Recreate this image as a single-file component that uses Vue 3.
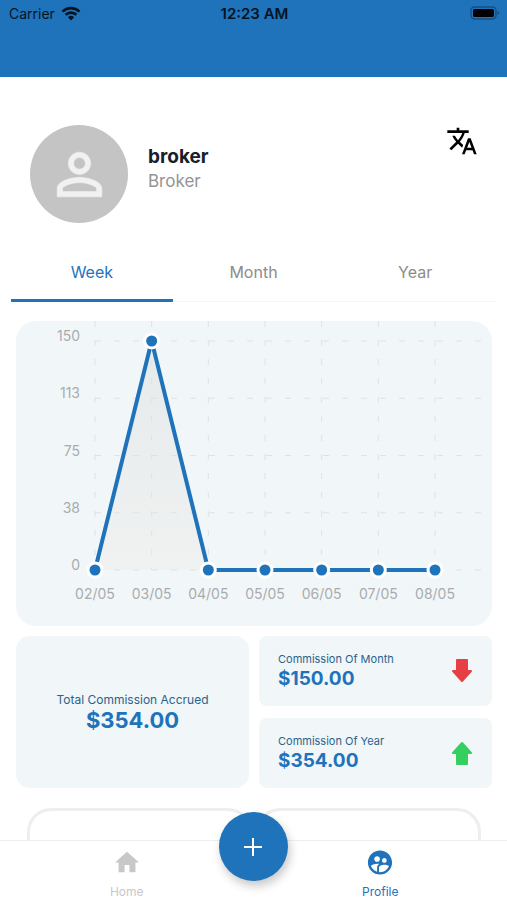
<template>
  <div class="app">
    <header class="topBar">
      <div class="carrier">
        <span>Carrier</span>
        <svg class="wifi" viewBox="0 0 20 15" aria-hidden="true">
          <path d="M1.5 5.6a12.2 12.2 0 0 1 17 0" />
          <path d="M4.6 8.8a7.8 7.8 0 0 1 10.8 0" />
          <path class="wifiDot" d="M10 14.4 6.9 11.2a4.5 4.5 0 0 1 6.2 0z" />
        </svg>
      </div>
      <span class="time">12:23 AM</span>
      <svg class="battery" viewBox="0 0 30 14" aria-hidden="true">
        <rect class="batteryCase" x="1" y="1" width="25" height="12" rx="3.5" />
        <rect x="3" y="3" width="21" height="8" rx="1.5" />
        <path class="batteryTip" d="M27.5 5v4q1.8-.8 1.8-2t-1.8-2z" />
      </svg>
    </header>

    <main class="content">
      <section class="profile">
        <div class="avatar">
          <svg viewBox="0 0 24 24" aria-hidden="true">
            <path
              d="M12 5.9c1.16 0 2.1.94 2.1 2.1s-.94 2.1-2.1 2.1S9.9 9.16 9.9 8s.94-2.1 2.1-2.1m0 9c2.97 0 6.1 1.46 6.1 2.1v1.1H5.9V17c0-.64 3.13-2.1 6.1-2.1M12 4C9.79 4 8 5.79 8 8s1.79 4 4 4 4-1.79 4-4-1.79-4-4-4zm0 9c-2.67 0-8 1.34-8 4v3h16v-3c0-2.66-5.33-4-8-4z"
            />
          </svg>
        </div>
        <div class="who">
          <h1>broker</h1>
          <p>Broker</p>
        </div>
        <button class="langBtn" type="button" aria-label="Language">
          <svg viewBox="0 0 24 24" aria-hidden="true">
            <path
              d="M12.87 15.07l-2.54-2.51.03-.03c1.74-1.94 2.98-4.17 3.71-6.53H17V4h-7V2H8v2H1v1.99h11.17C11.5 7.92 10.44 9.75 9 11.35 8.07 10.32 7.3 9.19 6.69 8h-2c.73 1.63 1.73 3.17 2.98 4.56l-5.09 5.02L4 19l5-5 3.11 3.11.76-2.04zM18.5 10h-2L12 22h2l1.12-3h4.75L21 22h2l-4.5-12zm-2.62 7l1.62-4.33L19.12 17h-3.24z"
            />
          </svg>
        </button>
      </section>

      <div class="tabs" role="tablist">
        <button
          v-for="tab in tabs"
          :key="tab"
          type="button"
          role="tab"
          class="tab"
          :class="{ active: tab === activeTab }"
          :aria-selected="tab === activeTab"
          @click="activeTab = tab"
        >
          {{ tab }}
        </button>
      </div>

      <section class="stats">
        <svg class="chart" viewBox="0 0 476 305">
          <defs>
            <linearGradient id="areaFill" x1="0" y1="0" x2="0" y2="1">
              <stop offset="0" stop-color="#e6eaea" />
              <stop offset="1" stop-color="#f0f2f2" />
            </linearGradient>
          </defs>
          <polygon :points="areaPoints" fill="url(#areaFill)" />
          <g class="grid">
            <line
              v-for="row in rows"
              :key="row.label"
              :x1="chart.left"
              :y1="row.y"
              x2="474"
              :y2="row.y"
            />
            <line
              v-for="p in points"
              :key="p.date"
              :x1="p.x"
              y1="0"
              :x2="p.x"
              :y2="chart.bottom"
            />
          </g>
          <polyline class="line" :points="linePoints" />
          <circle
            v-for="p in points"
            :key="p.date"
            class="dot"
            :cx="p.x"
            :cy="p.y"
            r="7"
          />
          <text
            v-for="row in rows"
            :key="row.label"
            class="axis end"
            x="64"
            :y="row.y"
          >
            {{ row.label }}
          </text>
          <text
            v-for="p in points"
            :key="p.date"
            class="axis middle"
            :x="p.x"
            y="278"
          >
            {{ p.date }}
          </text>
        </svg>

        <div class="cards">
          <div class="card total">
            <span class="label">Total Commission Accrued</span>
            <strong class="amount">$354.00</strong>
          </div>
          <div class="side">
            <div v-for="item in commissions" :key="item.label" class="card small">
              <div class="cardText">
                <span class="label">{{ item.label }}</span>
                <strong class="amount">{{ item.amount }}</strong>
              </div>
              <svg
                class="arrow"
                :class="item.trend"
                viewBox="0 0 22 26"
                aria-hidden="true"
              >
                <path
                  v-if="item.trend === 'down'"
                  d="M6 2h10v11h4l-9 10-9-10h4z"
                />
                <path v-else d="M6 24h10V13h4L11 3 2 13h4z" />
              </svg>
            </div>
          </div>
        </div>
      </section>

      <section class="boxes">
        <div class="box"></div>
        <div class="box"></div>
      </section>
    </main>

    <nav class="bottomNav">
      <a href="#home" class="navItem">
        <svg viewBox="0 0 24 24" aria-hidden="true">
          <path d="M10 20v-6h4v6h5v-8h3L12 3 2 12h3v8z" />
        </svg>
        <span>Home</span>
      </a>
      <a href="#profile" class="navItem current">
        <svg viewBox="0 0 24 24" aria-hidden="true">
          <path
            d="M11.99 2c-5.52 0-10 4.48-10 10s4.48 10 10 10 10-4.48 10-10-4.48-10-10-10zm3.61 6.34c1.07 0 1.93.86 1.93 1.93 0 1.07-.86 1.93-1.93 1.93-1.07 0-1.93-.86-1.93-1.93-.01-1.07.86-1.93 1.93-1.93zm-6-1.58c1.3 0 2.36 1.06 2.36 2.36 0 1.3-1.06 2.36-2.36 2.36s-2.36-1.06-2.36-2.36c0-1.31 1.05-2.36 2.36-2.36zm0 9.13v3.75c-2.4-.75-4.3-2.6-5.14-4.96 1.05-1.12 3.67-1.69 5.14-1.69.53 0 1.2.08 1.9.22-1.64.87-1.9 2.02-1.9 2.68zM11.99 20c-.27 0-.53-.01-.79-.04v-4.07c0-1.42 2.94-2.13 4.4-2.13 1.07 0 2.92.39 3.84 1.15-1.17 2.97-4.06 5.09-7.45 5.09z"
          />
        </svg>
        <span>Profile</span>
      </a>
      <button class="addBtn" type="button" aria-label="Add">
        <svg viewBox="0 0 20 20" aria-hidden="true">
          <path d="M10 1v18M1 10h18" />
        </svg>
      </button>
    </nav>
  </div>
</template>

<script setup>
import { computed, ref } from "vue";

const tabs = ["Week", "Month", "Year"];
const activeTab = ref("Week");

const week = [
  { date: "02/05", value: 0 },
  { date: "03/05", value: 150 },
  { date: "04/05", value: 0 },
  { date: "05/05", value: 0 },
  { date: "06/05", value: 0 },
  { date: "07/05", value: 0 },
  { date: "08/05", value: 0 },
];

const commissions = [
  { label: "Commission Of Month", amount: "$150.00", trend: "down" },
  { label: "Commission Of Year", amount: "$354.00", trend: "up" },
];

// plot area inside the 476 x 305 viewBox
const chart = { left: 79, right: 419, top: 20, bottom: 249, max: 150 };

const toY = (value) =>
  chart.bottom - (value / chart.max) * (chart.bottom - chart.top);

const points = computed(() => {
  const step = (chart.right - chart.left) / (week.length - 1);
  return week.map((d, i) => ({
    date: d.date,
    x: chart.left + i * step,
    y: toY(d.value),
  }));
});

const rows = [4, 3, 2, 1, 0].map((n) => {
  const value = (chart.max / 4) * n;
  return { label: Math.round(value), y: toY(value) };
});

const linePoints = computed(() =>
  points.value.map((p) => `${p.x},${p.y}`).join(" ")
);

const areaPoints = computed(
  () =>
    `${chart.left},${chart.bottom} ${linePoints.value} ${chart.right},${chart.bottom}`
);
</script>

<style>
body {
  margin: 0;
  background: #fff;
}
</style>

<style scoped>
.app {
  display: flex;
  flex-direction: column;
  height: 100vh;
  font-family: Inter, "Liberation Sans", sans-serif;
  background: #fff;
}

button {
  padding: 0;
  border: 0;
  background: none;
  font: inherit;
  cursor: pointer;
}

.topBar {
  display: grid;
  grid-template-columns: 1fr auto 1fr;
  align-items: start;
  flex: none;
  height: 71px;
  padding: 6px 7px 0 9px;
  background: #1e73bb;
  color: #06131f;
  font-size: 14px;
  line-height: 16px;
}

.carrier {
  display: flex;
  gap: 6px;
}

.wifi {
  width: 20px;
  height: 15px;
  fill: none;
  stroke: #06131f;
  stroke-width: 2.6;
}

.wifiDot {
  fill: #06131f;
  stroke: none;
}

.time {
  font-size: 15px;
  font-weight: 600;
}

.battery {
  justify-self: end;
  width: 30px;
  height: 14px;
  fill: #000;
}

.batteryCase {
  fill: none;
  stroke: #164f80;
  stroke-width: 1.4;
}

.batteryTip {
  fill: #164f80;
}

.content {
  flex: 1;
  min-height: 0;
  overflow-y: auto;
  scrollbar-width: none;
}

.profile {
  display: flex;
  gap: 20px;
  padding: 48px 29px 20px 30px;
}

.avatar {
  display: flex;
  align-items: center;
  justify-content: center;
  width: 98px;
  height: 98px;
  border-radius: 50%;
  background: #c4c4c4;
}

.avatar svg {
  width: 67px;
  height: 67px;
  fill: #f1f1f1;
  stroke: #f1f1f1;
  stroke-width: 0.2;
}

.who {
  flex: 1;
  padding-top: 20px;
}

.who h1,
.who p {
  margin: 0;
  line-height: 24px;
}

.who h1 {
  color: #17202b;
  font-size: 19px;
  font-weight: 700;
}

.who p {
  color: #949494;
  font-size: 17px;
}

.langBtn {
  align-self: flex-start;
  height: 32px;
}

.langBtn svg {
  display: block;
  width: 32px;
  height: 32px;
}

.tabs {
  display: flex;
  margin: 0 11px;
  border-bottom: 1px solid #f6f6f6;
}

.tab {
  flex: 1;
  height: 59px;
  margin-bottom: -1px;
  padding-top: 2px;
  border-bottom: 3px solid transparent;
  color: #8c8c8c;
  font-size: 16px;
}

.tab.active {
  border-color: #1e73bb;
  color: #1e73bb;
}

.stats {
  display: flex;
  flex-direction: column;
  gap: 10px;
  padding: 19px 15px 20px 16px;
}

.chart {
  display: block;
  width: 100%;
  border-radius: 20px;
  background: #f1f6f9;
}

.grid {
  stroke: #dfe2e4;
  stroke-dasharray: 6 13;
}

.line {
  fill: none;
  stroke: #1e73bb;
  stroke-width: 4;
}

.dot {
  fill: #1e73bb;
  stroke: #fff;
  stroke-width: 3;
}

.axis {
  fill: #a9acae;
  font-size: 14px;
}

.end {
  text-anchor: end;
}

.middle {
  text-anchor: middle;
}

.cards {
  display: grid;
  grid-template-columns: 1fr 1fr;
  gap: 10px;
}

.card {
  display: flex;
  background: #f1f6f9;
}

.total {
  flex-direction: column;
  align-items: center;
  justify-content: center;
  border-radius: 14px;
}

.side {
  display: flex;
  flex-direction: column;
  gap: 12px;
}

.small {
  align-items: center;
  justify-content: space-between;
  height: 70px;
  padding: 0 19px;
  border-radius: 8px;
}

.cardText {
  display: flex;
  flex-direction: column;
}

.label {
  color: #2b6389;
  font-size: 11px;
  line-height: 16px;
}

.amount {
  color: #1e73bb;
  font-size: 19px;
  font-weight: 700;
  line-height: 24px;
}

.total .label {
  font-size: 12px;
}

.total .amount {
  font-size: 22px;
}

.arrow {
  width: 22px;
  height: 26px;
  stroke-width: 2;
  stroke-linejoin: round;
}

.down {
  fill: #e64044;
  stroke: #e64044;
}

.up {
  fill: #35cf5f;
  stroke: #35cf5f;
}

.boxes {
  display: flex;
  gap: 4px;
  padding: 0 26px 80px 27px;
}

.box {
  flex: 1;
  height: 120px;
  border: 3px solid #eee;
  border-radius: 24px;
}

.bottomNav {
  position: relative;
  display: flex;
  flex: none;
  height: 59px;
  border-top: 1px solid #eee;
  background: #fff;
}

.navItem {
  display: flex;
  flex: 1;
  flex-direction: column;
  align-items: center;
  gap: 7px;
  padding-top: 7px;
  color: #c8c8c8;
  font-size: 12px;
  line-height: 16px;
  text-decoration: none;
}

.navItem svg {
  width: 30px;
  height: 30px;
  fill: currentColor;
}

.navItem.current {
  color: #1e73bb;
}

/* floats over the top edge of the bar */
.addBtn {
  position: absolute;
  top: -29px;
  left: calc(50% - 35px);
  display: flex;
  align-items: center;
  justify-content: center;
  width: 69px;
  height: 69px;
  border-radius: 50%;
  background: #1e73bb;
  box-shadow: 2px 5px 10px rgba(0, 0, 0, 0.22);
}

.addBtn svg {
  width: 20px;
  height: 20px;
  stroke: #fff;
  stroke-width: 2;
}
</style>
